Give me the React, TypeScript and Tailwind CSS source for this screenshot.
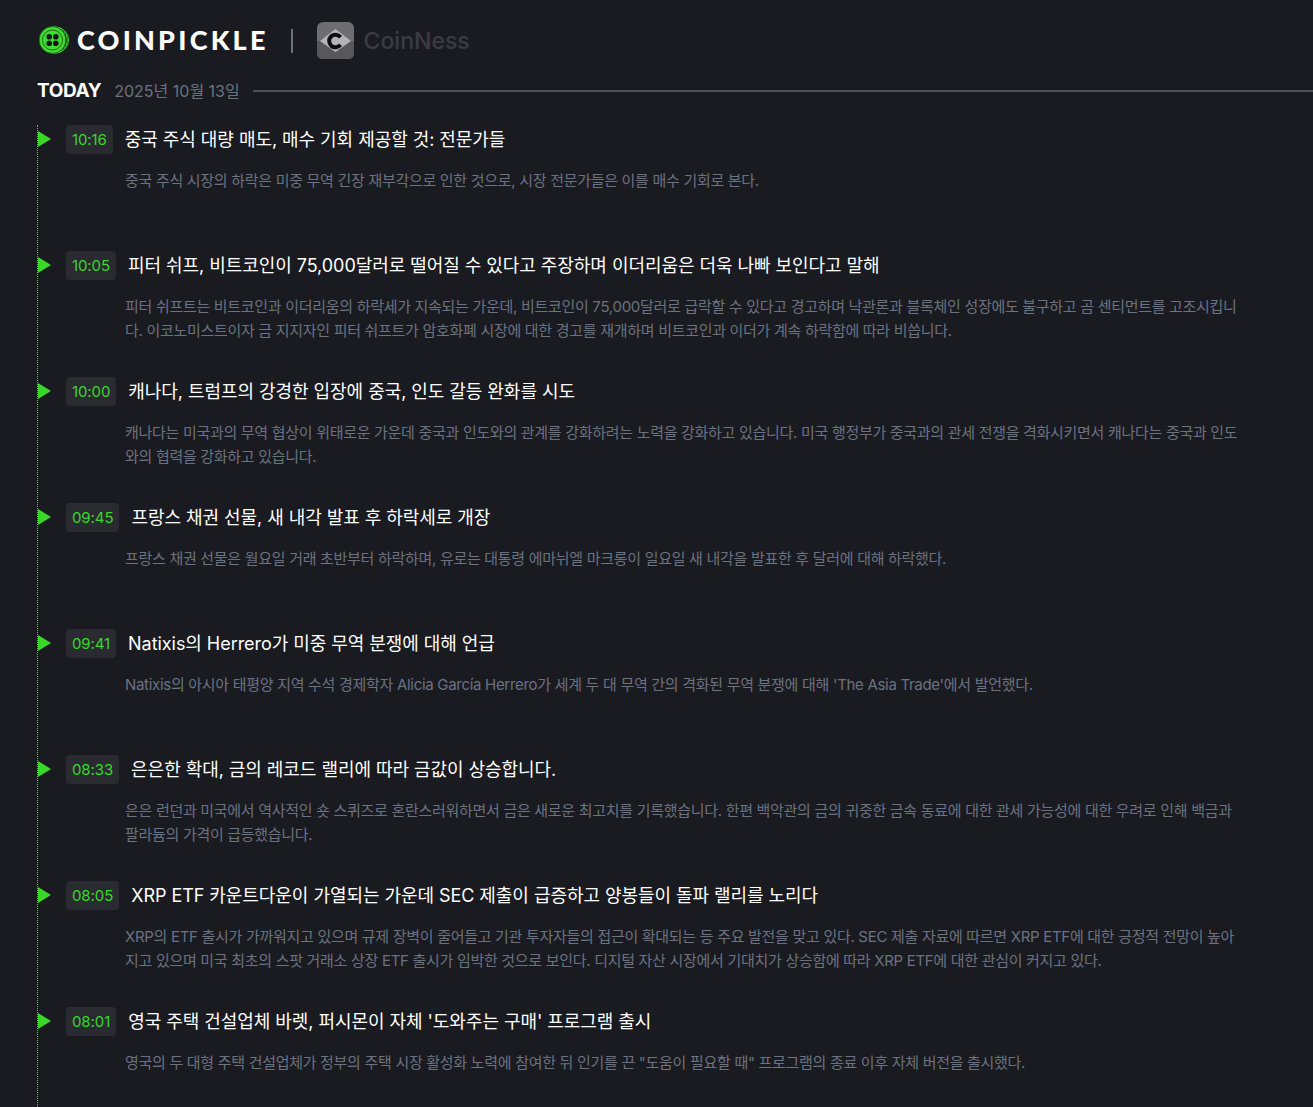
const NEWS = [
  {
    time: "10:16",
    title: "중국 주식 대량 매도, 매수 기회 제공할 것: 전문가들",
    body: "중국 주식 시장의 하락은 미중 무역 긴장 재부각으로 인한 것으로, 시장 전문가들은 이를 매수 기회로 본다.",
  },
  {
    time: "10:05",
    title: "피터 쉬프, 비트코인이 75,000달러로 떨어질 수 있다고 주장하며 이더리움은 더욱 나빠 보인다고 말해",
    body: "피터 쉬프트는 비트코인과 이더리움의 하락세가 지속되는 가운데, 비트코인이 75,000달러로 급락할 수 있다고 경고하며 낙관론과 블록체인 성장에도 불구하고 곰 센티먼트를 고조시킵니다. 이코노미스트이자 금 지지자인 피터 쉬프트가 암호화폐 시장에 대한 경고를 재개하며 비트코인과 이더가 계속 하락함에 따라 비씁니다.",
  },
  {
    time: "10:00",
    title: "캐나다, 트럼프의 강경한 입장에 중국, 인도 갈등 완화를 시도",
    body: "캐나다는 미국과의 무역 협상이 위태로운 가운데 중국과 인도와의 관계를 강화하려는 노력을 강화하고 있습니다. 미국 행정부가 중국과의 관세 전쟁을 격화시키면서 캐나다는 중국과 인도와의 협력을 강화하고 있습니다.",
  },
  {
    time: "09:45",
    title: "프랑스 채권 선물, 새 내각 발표 후 하락세로 개장",
    body: "프랑스 채권 선물은 월요일 거래 초반부터 하락하며, 유로는 대통령 에마뉘엘 마크롱이 일요일 새 내각을 발표한 후 달러에 대해 하락했다.",
  },
  {
    time: "09:41",
    title: "Natixis의 Herrero가 미중 무역 분쟁에 대해 언급",
    body: "Natixis의 아시아 태평양 지역 수석 경제학자 Alicia García Herrero가 세계 두 대 무역 간의 격화된 무역 분쟁에 대해 'The Asia Trade'에서 발언했다.",
  },
  {
    time: "08:33",
    title: "은은한 확대, 금의 레코드 랠리에 따라 금값이 상승합니다.",
    body: "은은 런던과 미국에서 역사적인 숏 스퀴즈로 혼란스러워하면서 금은 새로운 최고치를 기록했습니다. 한편 백악관의 금의 귀중한 금속 동료에 대한 관세 가능성에 대한 우려로 인해 백금과 팔라듐의 가격이 급등했습니다.",
  },
  {
    time: "08:05",
    title: "XRP ETF 카운트다운이 가열되는 가운데 SEC 제출이 급증하고 양봉들이 돌파 랠리를 노리다",
    body: "XRP의 ETF 출시가 가까워지고 있으며 규제 장벽이 줄어들고 기관 투자자들의 접근이 확대되는 등 주요 발전을 맞고 있다. SEC 제출 자료에 따르면 XRP ETF에 대한 긍정적 전망이 높아지고 있으며 미국 최초의 스팟 거래소 상장 ETF 출시가 임박한 것으로 보인다. 디지털 자산 시장에서 기대치가 상승함에 따라 XRP ETF에 대한 관심이 커지고 있다.",
  },
  {
    time: "08:01",
    title: "영국 주택 건설업체 바렛, 퍼시몬이 자체 '도와주는 구매' 프로그램 출시",
    body: "영국의 두 대형 주택 건설업체가 정부의 주택 시장 활성화 노력에 참여한 뒤 인기를 끈 \"도움이 필요할 때\" 프로그램의 종료 이후 자체 버전을 출시했다.",
  },
];

function PickleLogo() {
  return (
    <svg width="32" height="28" viewBox="0 0 32 28" className="shrink-0">
      <circle cx="17.5" cy="14" r="13" fill="none" stroke="#3ddc2e" strokeWidth="0.9" />
      <circle cx="16" cy="14" r="13.3" fill="none" stroke="#3ddc2e" strokeWidth="0.9" />
      <circle cx="14.5" cy="14" r="13.4" fill="#3ddc2e" stroke="#15301a" strokeWidth="0.6" />
      <circle cx="14.5" cy="14" r="10" fill="none" stroke="#1f4a1c" strokeWidth="0.8" />
      <circle cx="11.2" cy="10.7" r="2.8" fill="#14161a" />
      <circle cx="17.8" cy="10.7" r="2.8" fill="#14161a" />
      <circle cx="11.2" cy="17.3" r="2.8" fill="#14161a" />
      <circle cx="17.8" cy="17.3" r="2.8" fill="#14161a" />
    </svg>
  );
}

function CoinnessLogo() {
  return (
    <svg width="37" height="37" viewBox="0 0 37 37" className="shrink-0">
      <rect width="37" height="37" rx="6" fill="#6e6e70" />
      <path d="M0 19 L3 19 L18.5 30 L34 19 L37 19 L37 31 Q37 37 31 37 L6 37 Q0 37 0 31 Z" fill="#58585a" />
      <path d="M3 19 L18.5 7 L34 19 L18.5 30 Z" fill="#b4b4b6" />
      <path d="M23.5 15.2 A6.3 6.3 0 1 0 23.5 22.8" fill="none" stroke="#0e0e11" strokeWidth="4" />
    </svg>
  );
}

function NewsRow({ time, title, body }: { time: string; title: string; body: string }) {
  return (
    <li className="relative h-[126px] pl-[28px]">
      {/* Marker */}
      <span className="absolute left-0 top-[6px] h-0 w-0 border-y-[8.5px] border-l-[13px] border-y-transparent border-l-[#39d82b]" />
      <div className="flex items-center">
        <span className="flex h-[29px] items-center rounded-[4px] bg-[#2a2b30] px-[6px] pt-[1px] text-[15px] tracking-[-0.1px] text-[#39d82b]">
          {time}
        </span>
        <h3 className="ml-[12px] text-[18px] leading-[29px] font-normal tracking-[-0.05px] text-white">{title}</h3>
      </div>
      <p className="mt-[15px] ml-[59px] text-[15px] leading-[24px] tracking-[-0.3px] text-[#6b7280]">{body}</p>
    </li>
  );
}

export default function App() {
  return (
    <div
      className="h-[1107px] overflow-hidden bg-[#1a1b20] pl-[37px]"
      style={{ fontFamily: 'Inter, "Noto Sans CJK KR", sans-serif' }}
    >
      <header className="flex h-[81px] items-center pl-[1px]">
        <span className="mb-[2px]">
          <PickleLogo />
        </span>
        <span
          className="mb-[2px] ml-[7px] text-[27px] leading-none font-black tracking-[3.2px] text-white"
          style={{ fontFamily: "Lato, sans-serif" }}
        >
          COINPICKLE
        </span>
        <span className="ml-[22px] h-[24px] w-[2px] bg-[#6b7280]" />
        <span className="ml-[24px]">
          <CoinnessLogo />
        </span>
        <span className="mt-[2px] ml-[10px] text-[23px] leading-none font-medium text-[#3b3c41]">CoinNess</span>
      </header>

      <div className="flex h-[20px] items-center">
        <span className="text-[19px] font-bold tracking-[-0.4px] text-white">TODAY</span>
        <span className="ml-[13px] text-[16px] text-[#6b7280]">2025년 10월 13일</span>
        <span className="ml-[13px] h-[2px] flex-1 bg-[#515257]" />
      </div>

      <ul className="mt-[24px] mr-[72px] border-l border-dotted border-[#39d82b]">
        {NEWS.map((item) => (
          <NewsRow key={item.time} {...item} />
        ))}
      </ul>
    </div>
  );
}
